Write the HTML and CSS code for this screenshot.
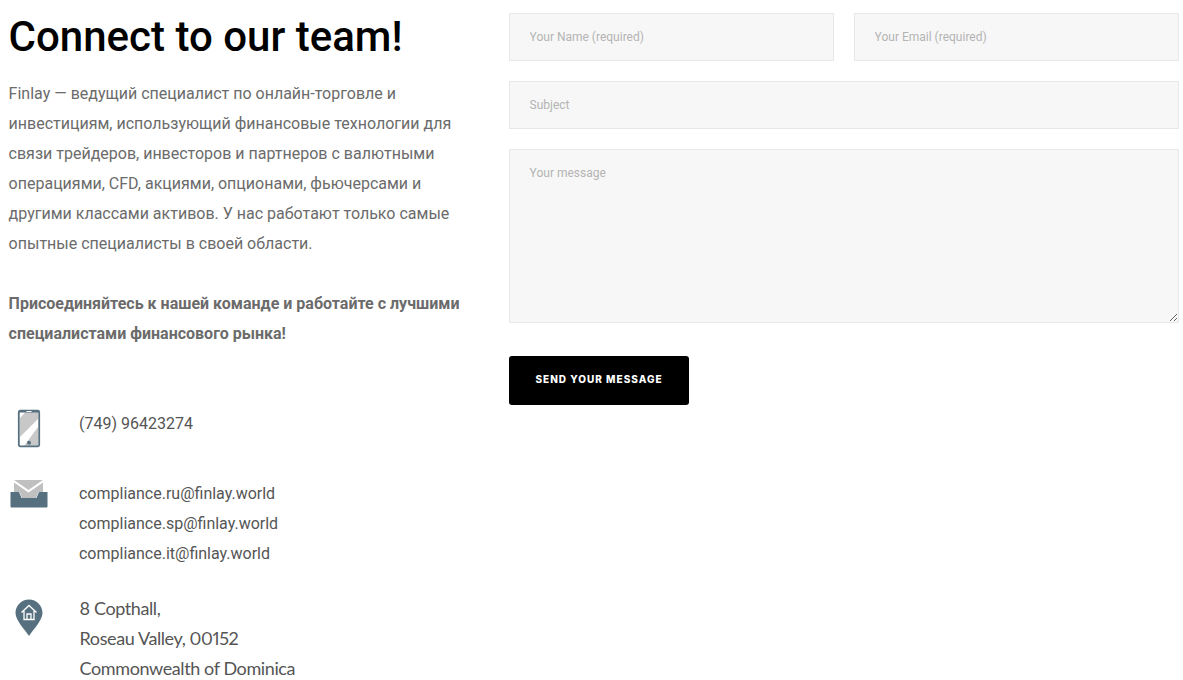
FILE: index.html
```html
<!DOCTYPE html>
<html lang="ru">
<head>
<meta charset="utf-8">
<title>Connect to our team</title>
<link rel="stylesheet" href="styles.css">
</head>
<body>
<main class="page">
  <section class="info">
    <h1 class="title">Connect to our team!</h1>
    <p class="lead">Finlay — ведущий специалист по онлайн-торговле и инвестициям, использующий финансовые технологии для связи трейдеров, инвесторов и партнеров с валютными операциями, CFD, акциями, опционами, фьючерсами и другими классами активов. У нас работают только самые опытные специалисты в своей области.</p>
    <p class="lead strong">Присоединяйтесь к нашей команде и работайте с лучшими специалистами финансового рынка!</p>
    <ul class="contacts">
      <li class="contact contact-phone">
        <span class="icon">
          <svg width="26" height="40" viewBox="0 0 26 40">
            <path d="M9.500 3 H22 V10 L4 28 V9 Z" fill="#c8c8c8"/>
            <path d="M22 18 V37 H8 Z" fill="#c8c8c8"/>
            <rect x="2.800" y="1.700" width="20.400" height="35.600" rx="1.500" fill="none" stroke="#56707f" stroke-width="1.800"/>
            <rect x="3" y="1.500" width="20" height="2" fill="#56707f"/>
            <rect x="10.500" y="2" width="5" height="1" fill="#fff"/>
            <circle cx="13" cy="33.800" r="2" fill="#56707f"/>
          </svg>
        </span>
        <div class="lines"><span>(749) 96423274</span></div>
      </li>
      <li class="contact contact-mail">
        <span class="icon">
          <svg width="38" height="30" viewBox="0 0 38 30">
            <path d="M4 1 H33 L18.500 11 Z" fill="#c0c0c0"/>
            <path d="M4 3.500 L18.500 13.500 L33 3.500 V13 H28.500 L26 19 H12 L9.500 13 H4 Z" fill="#c0c0c0"/>
            <path d="M0.500 13 H9 L11.500 19 H26.500 L29 13 H37.500 V27.500 Q37.500 28.500 36.500 28.500 H1.500 Q0.500 28.500 0.500 27.500 Z" fill="#56707f"/>
          </svg>
        </span>
        <div class="lines">
          <span>compliance.ru@finlay.world</span>
          <span>compliance.sp@finlay.world</span>
          <span>compliance.it@finlay.world</span>
        </div>
      </li>
      <li class="contact contact-addr">
        <span class="icon">
          <svg width="28" height="38" viewBox="0 0 28 38">
            <path d="M14 0.500 C21.500 0.500 27.500 6.500 27.500 14 C27.500 21 18 31 14 37 C10 31 0.500 21 0.500 14 C0.500 6.500 6.500 0.500 14 0.500 Z" fill="#56707f"/>
            <path d="M6.500 13.500 L14 6.500 L21.500 13.500 M9 12 V20.500 H19 V12 M12 20.500 V15 H16 V20.500" fill="none" stroke="#fff" stroke-width="1.300"/>
          </svg>
        </span>
        <div class="lines address">
          <span>8 Copthall,</span>
          <span>Roseau Valley, 00152</span>
          <span>Commonwealth of Dominica</span>
        </div>
      </li>
    </ul>
  </section>
  <form class="form">
    <div class="row">
      <input class="field" type="text" placeholder="Your Name (required)">
      <input class="field" type="text" placeholder="Your Email (required)">
    </div>
    <input class="field" type="text" placeholder="Subject">
    <textarea class="field message" placeholder="Your message"></textarea>
    <button class="send" type="button">SEND YOUR MESSAGE</button>
  </form>
</main>
</body>
</html>
```
FILE: styles.css
```css
* { box-sizing: border-box; }
html, body { margin: 0; height: 680px; overflow: hidden; background: #fff; }
body { font-family: Roboto, "Liberation Sans", sans-serif; color: #666; }
.page { display: flex; padding: 0 4px 0 8px; gap: 30px; }
.info { width: 471px; flex: none; padding-left: 0.600px; }
.title { margin: 13px 0 0; font-size: 42px; line-height: 48px; font-weight: 500; letter-spacing: 0; color: #000; }
.lead { margin: 18px 0 0; font-size: 16px; line-height: 30px; color: #6b6b6b; }
.lead + .lead { margin-top: 30px; }
.strong { font-weight: 700; }
.contacts { list-style: none; margin: 0; padding: 0; margin-top: 60px; }
.contact { display: flex; }
.contact-mail { margin-top: 30px; }
.contact-addr { margin-top: 24px; }
.icon { width: 70.400px; flex: none; display: flex; padding-left: 1.400px; }
.contact-phone .icon { padding-left: 7px; margin-top: 0; }
.contact-mail .icon { margin-top: 0; }
.contact-addr .icon { padding-left: 6.400px; margin-top: 6px; }
.lines { display: flex; flex-direction: column; font-size: 16px; line-height: 30px; color: #555; }
.address { font-family: Lato, "Open Sans", sans-serif; font-size: 18px; letter-spacing: -0.400px; padding-left: 0.600px; color: #555; font-variant-numeric: proportional-nums; }
.form { flex: 1; display: flex; flex-direction: column; gap: 20px; padding-top: 13px; align-items: flex-start; }
.row { display: flex; gap: 20px; width: 100%; }
.field { width: 100%; height: 48px; min-width: 0; padding: 0 19.600px; background: #f7f7f7; border: 1px solid #e8e8e8; border-radius: 0; font-family: Roboto, sans-serif; font-size: 12px; color: #666; outline: none; }
.field::placeholder { color: #b4b4b4; opacity: 1; }
.message { height: 174px; padding: 16px 19.600px; display: block; resize: vertical; line-height: 14px; }
.send { margin-top: 13px; width: 180px; height: 49px; padding: 0 0 4px; background: #000; color: #fff; border: 0; border-radius: 3px; font-family: Inter, Roboto, sans-serif; font-weight: 800; font-size: 10px; letter-spacing: 1px; }
```
